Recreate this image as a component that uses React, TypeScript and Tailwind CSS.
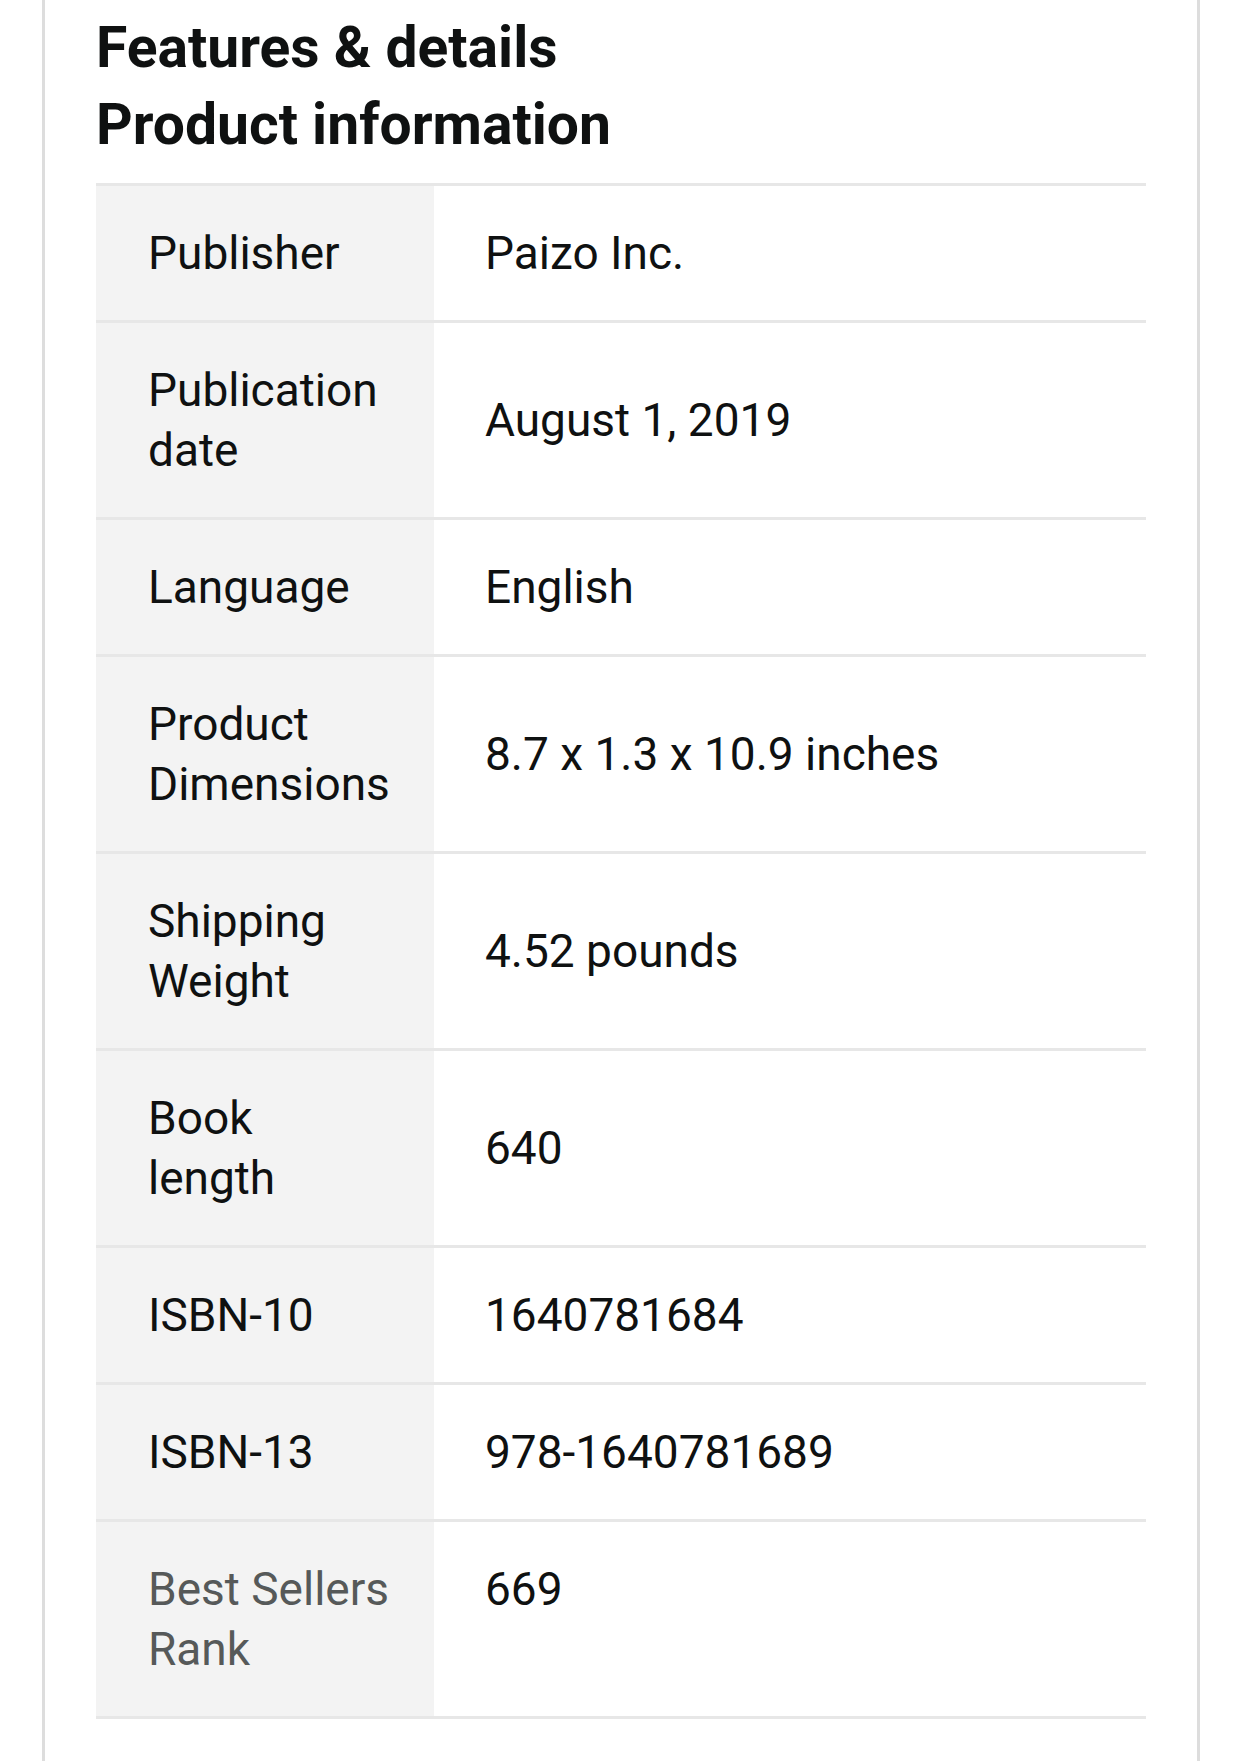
import React from 'react'

interface DetailRow {
  label: string
  value: string
  muted?: boolean
}

// product details table rows
const rows: DetailRow[] = [
  { label: 'Publisher', value: 'Paizo Inc.' },
  { label: 'Publication\ndate', value: 'August 1, 2019' },
  { label: 'Language', value: 'English' },
  { label: 'Product\nDimensions', value: '8.7 x 1.3 x 10.9 inches' },
  { label: 'Shipping\nWeight', value: '4.52 pounds' },
  { label: 'Book\nlength', value: '640' },
  { label: 'ISBN-10', value: '1640781684' },
  { label: 'ISBN-13', value: '978-1640781689' },
  { label: 'Best Sellers\nRank', value: '669', muted: true },
]

const App = () => {
  return (
    <div className="min-h-screen bg-white font-['Roboto',sans-serif] text-[#0f1111]">
      <div className="ml-[42px] w-[1158px] min-h-screen border-x-[3px] border-[#dddddd] px-[51px] pt-[9px]">
        <h2 className="text-[57px] leading-[77px] font-bold">Features &amp; details</h2>
        <h2 className="text-[57px] leading-[77px] font-bold">Product information</h2>

        <div className="mt-[20px] border-t-[3px] border-[#e7e7e7]">
          {rows.map((row) => (
            <div key={row.label} className="flex border-b-[3px] border-[#e7e7e7]">
              <div
                className={`w-[338px] shrink-0 bg-[#f3f3f3] pl-[52px] pr-[20px] pt-[37px] pb-[37px] text-[46px] leading-[60px] whitespace-pre-line ${
                  row.muted ? 'text-[#565959]' : ''
                }`}
              >
                {row.label}
              </div>
              <div
                className={`flex flex-1 pl-[51px] pt-[37px] pb-[37px] text-[46px] leading-[60px] ${
                  row.muted ? 'items-start' : 'items-center'
                }`}
              >
                {row.value}
              </div>
            </div>
          ))}
        </div>
      </div>
    </div>
  )
}

export default App
